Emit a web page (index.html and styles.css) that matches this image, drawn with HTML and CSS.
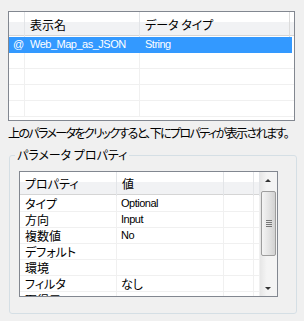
FILE: index.html
```html
<!DOCTYPE html>
<html lang="ja">

<head>
    <meta charset="UTF-8">
    <title>パラメータ</title>
    <link rel="stylesheet" href="styles.css">
</head>

<body>
    <div class="param-list">
        <div class="list-header">
            <div class="col-mark"></div>
            <div class="col-name">表示名</div>
            <div class="col-type">データ タイプ</div>
        </div>
        <div class="list-row selected">
            <div class="col-mark latin">@</div>
            <div class="col-name latin">Web_Map_as_JSON</div>
            <div class="col-type latin">String</div>
        </div>
        <div class="list-row"><div class="col-mark"></div><div class="col-name"></div><div class="col-type"></div></div>
        <div class="list-row"><div class="col-mark"></div><div class="col-name"></div><div class="col-type"></div></div>
        <div class="list-row"><div class="col-mark"></div><div class="col-name"></div><div class="col-type"></div></div>
        <div class="list-row"><div class="col-mark"></div><div class="col-name"></div><div class="col-type"></div></div>
    </div>

    <p class="hint">上のパラメータをクリックすると、下にプロパティが表示されます。</p>

    <fieldset class="props-group">
        <legend>パラメータ プロパティ</legend>
        <div class="props-list">
            <div class="props-body">
                <div class="props-header">
                    <div class="p-key">プロパティ</div>
                    <div class="p-val">値</div>
                    <div class="p-x"></div>
                    <div class="p-y"></div>
                </div>
                <div class="props-row"><div class="p-key">タイプ</div><div class="p-val latin">Optional</div><div class="p-x"></div><div class="p-y"></div></div>
                <div class="props-row"><div class="p-key">方向</div><div class="p-val latin">Input</div><div class="p-x"></div><div class="p-y"></div></div>
                <div class="props-row"><div class="p-key">複数値</div><div class="p-val latin">No</div><div class="p-x"></div><div class="p-y"></div></div>
                <div class="props-row"><div class="p-key">デフォルト</div><div class="p-val"></div><div class="p-x"></div><div class="p-y"></div></div>
                <div class="props-row"><div class="p-key">環境</div><div class="p-val"></div><div class="p-x"></div><div class="p-y"></div></div>
                <div class="props-row"><div class="p-key">フィルタ</div><div class="p-val">なし</div><div class="p-x"></div><div class="p-y"></div></div>
                <div class="props-row"><div class="p-key">取得元</div><div class="p-val"></div><div class="p-x"></div><div class="p-y"></div></div>
            </div>
            <div class="scrollbar">
                <div class="arrow arrow-up"></div>
                <div class="thumb">
                    <div class="grip"></div>
                </div>
                <div class="track"></div>
                <div class="arrow arrow-down"></div>
            </div>
        </div>
    </fieldset>
</body>

</html>
```

FILE: styles.css
```css
body {
    font-family: "Noto Sans CJK JP", sans-serif;
    font-size: 12px;
    font-feature-settings: "palt";
    background-color: #f0f0f0;
    color: #000;
    margin: 0;
    padding: 11px 0 0 8px;
}

.latin {
    font-family: "Liberation Sans", sans-serif;
    font-size: 11px;
    letter-spacing: -0.5px;
}

/* top parameter list */
.param-list {
    width: 285px;
    height: 108px;
    border: 1px solid #828790;
    background-color: #fff;
    overflow: hidden;
}

.list-header,
.list-row {
    display: grid;
    grid-template-columns: 16px 115px 150px;
}

.list-header {
    height: 23px;
    line-height: 25px;
    background: linear-gradient(#fff 0, #fff 10px, #f1f2f4 10px, #f1f2f4 100%);
    border-bottom: 1px solid #d5d5d5;
    margin-bottom: 1px;
}

.list-header > div {
    border-right: 1px solid #e3e5e8;
    padding-left: 5px;
}

.list-header .col-type {
    border-right: 1px solid #dcdcdc;
}

.list-row {
    height: 15px;
    line-height: 15px;
    border-bottom: 1px solid #f0f0f0;
}

.list-row > div {
    border-right: 1px solid #f0f0f0;
    padding-left: 5px;
    white-space: nowrap;
}

.list-row .col-mark {
    padding-left: 4px;
}

.list-row .col-type {
    border-right: none;
}

.list-row.selected {
    background-color: #3399ff;
    color: #fff;
    border-bottom-color: #3399ff;
    width: 283px;
}

.list-row.selected > div {
    border-right-color: #3399ff;
}

.hint {
    margin: 5px 0 0 0;
    line-height: 14px;
    letter-spacing: -1.6px;
    white-space: nowrap;
}

/* property group */
.props-group {
    box-sizing: border-box;
    width: 288px;
    height: 166px;
    margin: 8px 0 0 1px;
    padding: 9px 9px 0 9px;
    border: 1px solid #d5dfe5;
    border-radius: 3px;
}

.props-group legend {
    padding: 0 2px;
    margin-left: -4px;
    line-height: 14px;
}

.props-list {
    display: flex;
    width: 257px;
    height: 124px;
    border: 1px solid #828790;
    background-color: #fff;
    overflow: hidden;
}

.props-body {
    flex: 1;
    overflow: hidden;
}

.props-header,
.props-row {
    display: grid;
    grid-template-columns: 97px 107px 30px 6px;
}

.props-header {
    height: 22px;
    line-height: 24px;
    background: linear-gradient(#fff 0, #fff 10px, #f1f2f4 10px, #f1f2f4 100%);
    border-bottom: 1px solid #d5d5d5;
    margin-bottom: 1px;
}

.props-header > div {
    border-right: 1px solid #e3e5e8;
    padding-left: 5px;
}

.props-row {
    height: 15px;
    line-height: 15px;
    border-bottom: 1px solid #f0f0f0;
}

.props-row > div {
    border-right: 1px solid #f0f0f0;
    padding-left: 5px;
    white-space: nowrap;
}

.props-row .p-val {
    padding-left: 4px;
}

/* vista style scrollbar */
.scrollbar {
    width: 17px;
    display: flex;
    flex-direction: column;
    background: linear-gradient(to right, #e6e6e6, #f4f4f4 40%, #f4f4f4);
}

.arrow {
    height: 17px;
    position: relative;
}

.arrow::after {
    content: "";
    position: absolute;
    left: 5px;
    border-left: 3px solid transparent;
    border-right: 3px solid transparent;
}

.arrow-up::after {
    top: 7px;
    border-bottom: 3px solid #333;
}

.arrow-down::after {
    top: 8px;
    border-top: 3px solid #333;
}

.thumb {
    height: 63px;
    margin: 2px 1px 0 1px;
    border: 1px solid #9d9d9d;
    border-radius: 2px;
    background: linear-gradient(to right, #f4f4f4, #e4e4e4 50%, #d2d2d2);
    position: relative;
}

.grip {
    position: absolute;
    left: 4px;
    top: 28px;
    width: 6px;
    height: 7px;
    background: repeating-linear-gradient(#777 0, #777 1px, transparent 1px, transparent 2px);
}

.track {
    flex: 1;
}
```
